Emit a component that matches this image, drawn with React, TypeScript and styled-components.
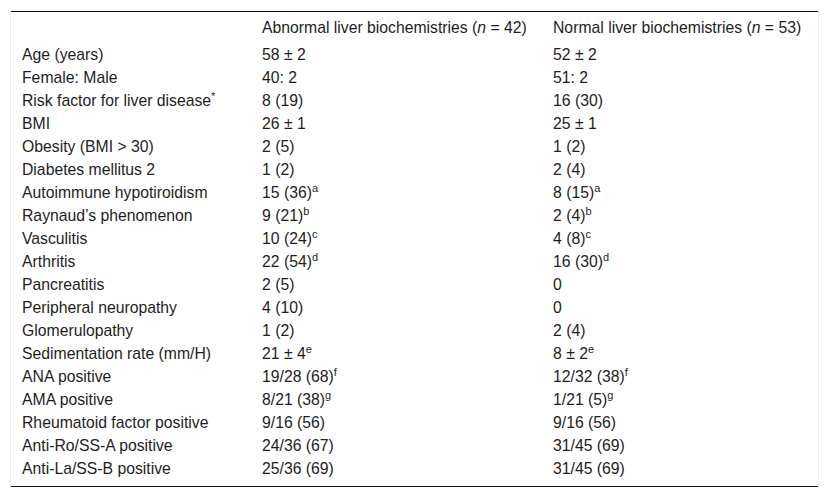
import React from "react";
import styled, { createGlobalStyle } from "styled-components";

const GlobalStyle = createGlobalStyle`
  html, body {
    margin: 0;
    padding: 0;
    background: #ffffff;
  }
  body {
    font-family: "Liberation Sans", Arial, sans-serif;
    color: #1e1e1e;
  }
`;

const Frame = styled.div`
  margin: 11px 0 0 10px;
  width: 809px;
  box-sizing: border-box;
  border-left: 1px solid #e8e8e8;
  border-right: 1px solid #e8e8e8;
  padding-bottom: 1px;
`;

const Table = styled.table`
  width: 100%;
  table-layout: fixed;
  border-collapse: collapse;
  font-size: 15.75px;
  border-top: 1px solid #111;
  border-bottom: 1px solid #111;
`;

const HeadCell = styled.th`
  text-align: left;
  font-weight: 400;
  padding: 0 11px;
  height: 31px;
  line-height: 17px;
  vertical-align: middle;
  white-space: nowrap;
`;

const Row = styled.tr<{ $last?: boolean }>`
  height: ${(p) => (p.$last ? "29px" : "23px")};
`;

const Cell = styled.td<{ $last?: boolean }>`
  padding: ${(p) => (p.$last ? "0 11px 6px" : "0 11px")};
  line-height: 17px;
  vertical-align: middle;
  white-space: nowrap;
`;

const Sup = styled.sup`
  font-size: 11px;
  line-height: 0;
  vertical-align: 6.5px;
`;

type Value = [string, string?];

const rows: { label: string; mark?: string; a: Value; b: Value }[] = [
  { label: "Age (years)", a: ["58 ± 2"], b: ["52 ± 2"] },
  { label: "Female: Male", a: ["40: 2"], b: ["51: 2"] },
  { label: "Risk factor for liver disease", mark: "*", a: ["8 (19)"], b: ["16 (30)"] },
  { label: "BMI", a: ["26 ± 1"], b: ["25 ± 1"] },
  { label: "Obesity (BMI > 30)", a: ["2 (5)"], b: ["1 (2)"] },
  { label: "Diabetes mellitus 2", a: ["1 (2)"], b: ["2 (4)"] },
  { label: "Autoimmune hypotiroidism", a: ["15 (36)", "a"], b: ["8 (15)", "a"] },
  { label: "Raynaud’s phenomenon", a: ["9 (21)", "b"], b: ["2 (4)", "b"] },
  { label: "Vasculitis", a: ["10 (24)", "c"], b: ["4 (8)", "c"] },
  { label: "Arthritis", a: ["22 (54)", "d"], b: ["16 (30)", "d"] },
  { label: "Pancreatitis", a: ["2 (5)"], b: ["0"] },
  { label: "Peripheral neuropathy", a: ["4 (10)"], b: ["0"] },
  { label: "Glomerulopathy", a: ["1 (2)"], b: ["2 (4)"] },
  { label: "Sedimentation rate (mm/H)", a: ["21 ± 4", "e"], b: ["8 ± 2", "e"] },
  { label: "ANA positive", a: ["19/28 (68)", "f"], b: ["12/32 (38)", "f"] },
  { label: "AMA positive", a: ["8/21 (38)", "g"], b: ["1/21 (5)", "g"] },
  { label: "Rheumatoid factor positive", a: ["9/16 (56)"], b: ["9/16 (56)"] },
  { label: "Anti-Ro/SS-A positive", a: ["24/36 (67)"], b: ["31/45 (69)"] },
  { label: "Anti-La/SS-B positive", a: ["25/36 (69)"], b: ["31/45 (69)"] },
];

function ValueText({ v }: { v: Value }) {
  return (
    <>
      {v[0]}
      {v[1] && <Sup>{v[1]}</Sup>}
    </>
  );
}

export default function App() {
  return (
    <>
      <GlobalStyle />
      <Frame>
        <Table>
          <colgroup>
            <col style={{ width: 240 }} />
            <col style={{ width: 291 }} />
            <col />
          </colgroup>
          <thead>
            <tr>
              <HeadCell />
              <HeadCell>
                Abnormal liver biochemistries (<i>n</i> = 42)
              </HeadCell>
              <HeadCell>
                Normal liver biochemistries (<i>n</i> = 53)
              </HeadCell>
            </tr>
          </thead>
          <tbody>
            {rows.map((r, i) => {
              const last = i === rows.length - 1;
              return (
                <Row key={r.label} $last={last}>
                  <Cell $last={last}>
                    {r.label}
                    {r.mark && <Sup>{r.mark}</Sup>}
                  </Cell>
                  <Cell $last={last}>
                    <ValueText v={r.a} />
                  </Cell>
                  <Cell $last={last}>
                    <ValueText v={r.b} />
                  </Cell>
                </Row>
              );
            })}
          </tbody>
        </Table>
      </Frame>
    </>
  );
}
